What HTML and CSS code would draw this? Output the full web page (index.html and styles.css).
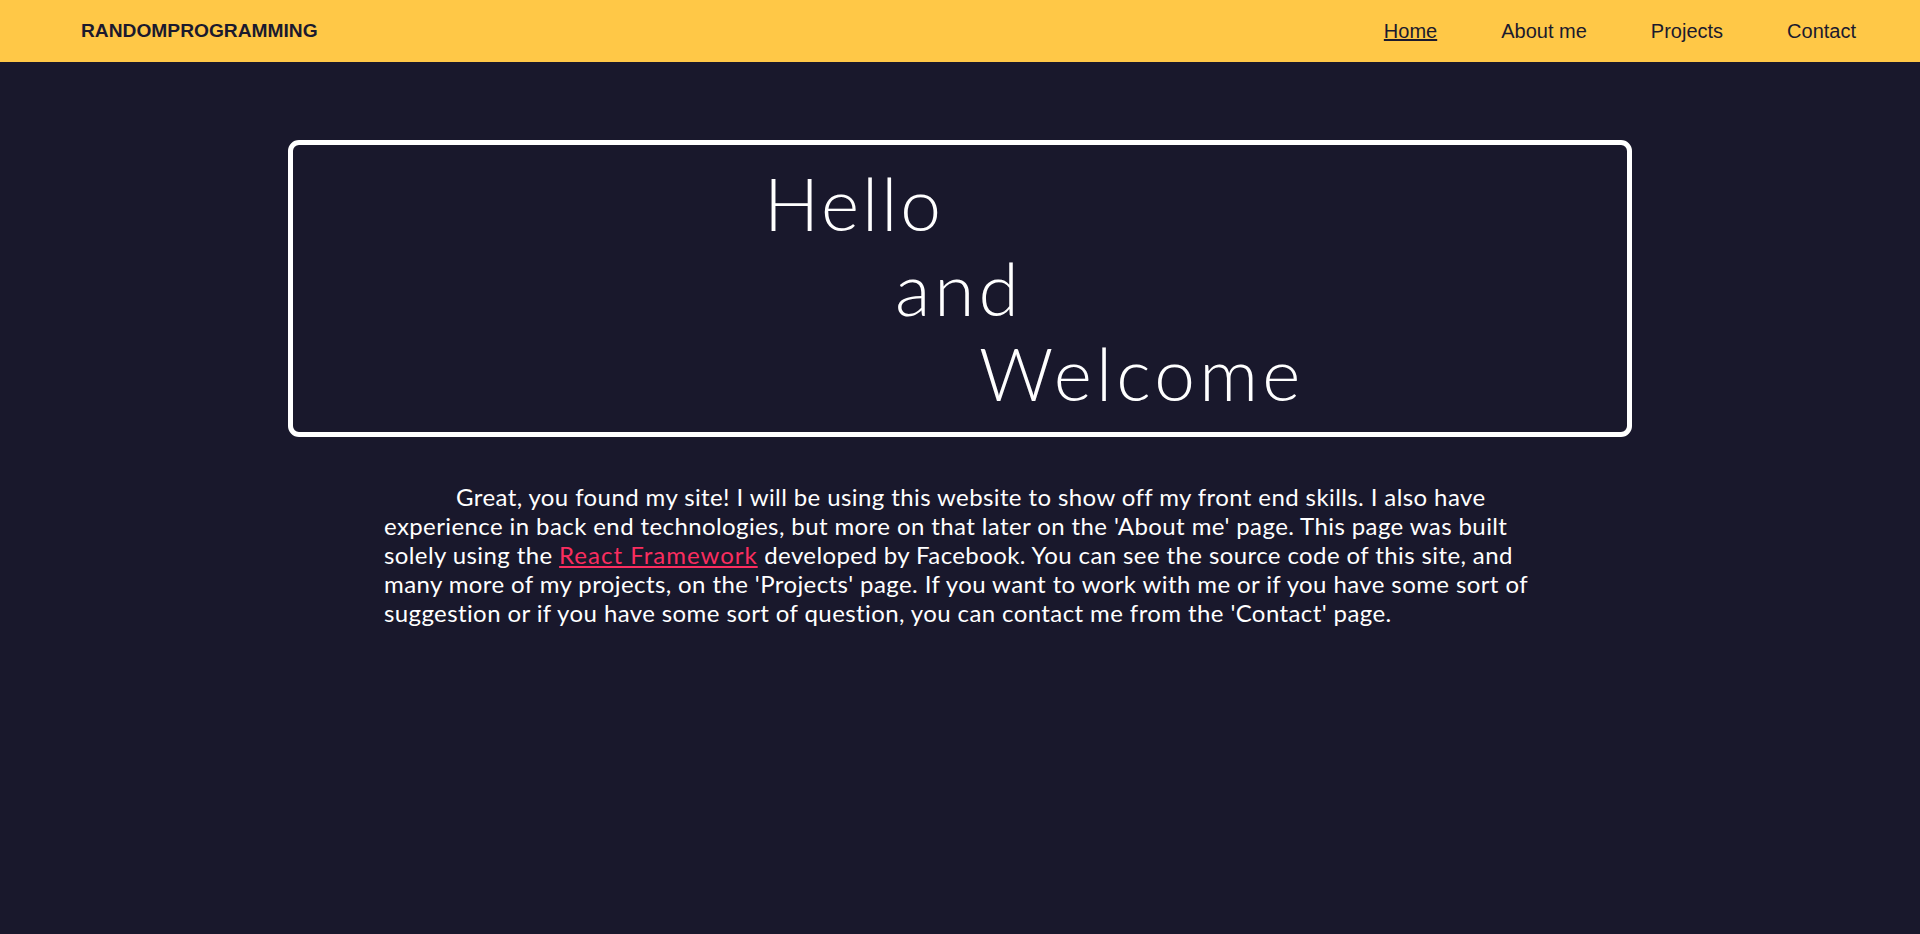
FILE: index.html
```html
<!DOCTYPE html>
<html lang="en">
<head>
<meta charset="utf-8">
<title>RandomProgramming</title>
<link rel="stylesheet" href="styles.css">
</head>
<body>
<header class="topbar">
  <div class="logo">RANDOMPROGRAMMING</div>
  <nav class="nav">
    <a class="nav-link active" href="#">Home</a>
    <a class="nav-link" href="#">About me</a>
    <a class="nav-link" href="#">Projects</a>
    <a class="nav-link" href="#">Contact</a>
  </nav>
</header>
<main class="main">
  <section class="hero">
    <div class="hero-line l1">Hello</div>
    <div class="hero-line l2">and</div>
    <div class="hero-line l3">Welcome</div>
  </section>
  <p class="intro">Great, you found my site! I will be using this website to show off my front end skills. I also have experience in back end technologies, but more on that later on the 'About me' page. This page was built solely using the <a class="link" href="#">React Framework</a> developed by Facebook. You can see the source code of this site, and many more of my projects, on the 'Projects' page. If you want to work with me or if you have some sort of suggestion or if you have some sort of question, you can contact me from the 'Contact' page.</p>
</main>
</body>
</html>
```

FILE: styles.css
```css
html, body {
  margin: 0;
  padding: 0;
}
body {
  background: #19182c;
  min-height: 934px;
  font-family: "Lato", "Open Sans", sans-serif;
  color: #ffffff;
}
.topbar {
  height: 62px;
  background: #ffc847;
  display: flex;
  align-items: center;
  justify-content: space-between;
  padding: 0 64px 0 81px;
  box-sizing: border-box;
  font-family: "Liberation Sans", Arial, sans-serif;
  color: #1b1a2e;
}
.logo {
  font-weight: bold;
  font-size: 19.2px;
}
.nav {
  display: flex;
  gap: 64px;
}
.nav-link {
  font-size: 20px;
  color: #1b1a2e;
  text-decoration: none;
}
.nav-link.active {
  text-decoration: underline;
}
.main {
  padding-top: 78px;
}
.hero {
  width: 1344px;
  margin: 0 auto;
  box-sizing: border-box;
  border: 5px solid #ffffff;
  border-radius: 11px;
  padding: 16px 0;
  display: flex;
  flex-direction: column;
  align-items: flex-start;
  font-weight: 300;
  font-size: 73px;
  line-height: 85px;
  letter-spacing: 3px;
}
.hero-line.l1 { margin-left: 471px; }
.hero-line.l2 { margin-left: 602px; letter-spacing: 4px; }
.hero-line.l3 { margin-left: 686px; letter-spacing: 4.2px; }
.intro {
  width: 1152px;
  margin: 45px auto 0;
  font-size: 24px;
  line-height: 29px;
  letter-spacing: 0.4px;
  text-indent: 72px;
}
.link {
  color: #fa2d5f;
  text-decoration: underline;
  letter-spacing: 1px;
}
```
